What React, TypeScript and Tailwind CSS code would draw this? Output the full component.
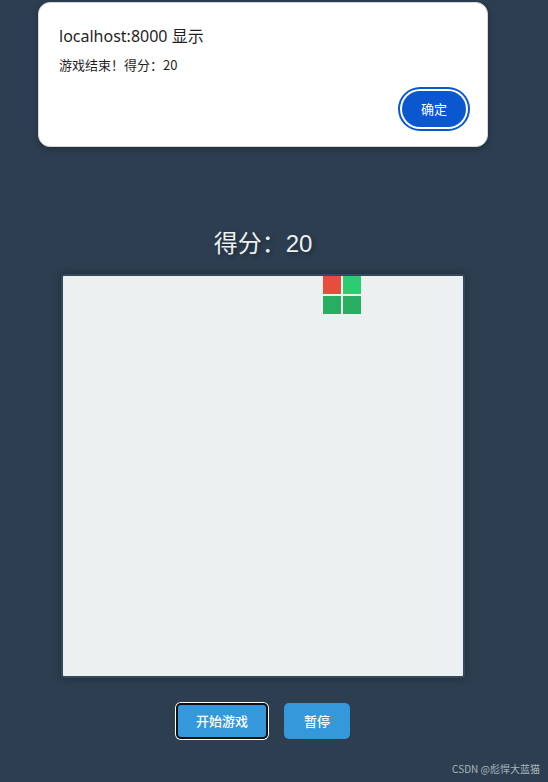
import React from 'react';

type Cell = { x: number; y: number; color: string };

// 当前方块，格子 20px
const piece: Cell[] = [
  { x: 13, y: 0, color: 'bg-[#e74c3c]' },
  { x: 14, y: 0, color: 'bg-[#2ecc71]' },
  { x: 13, y: 1, color: 'bg-[#27ae60]' },
  { x: 14, y: 1, color: 'bg-[#27ae60]' },
];

const AlertDialog: React.FC = () => (
  <div className="absolute left-[38px] top-[2px] w-[450px] h-[145px] bg-white rounded-[12px] border border-[#d6d6d6] shadow-[0_2px_6px_rgba(0,0,0,0.25)] px-[20px] pt-[21px] flex flex-col">
    <div className="text-[16px] leading-[24px] text-[#1f1f1f] font-['Noto_Sans','Noto_Sans_CJK_SC',sans-serif]">
      localhost:8000 显示
    </div>
    <div className="mt-[8px] text-[13px] leading-[18px] text-[#1f1f1f] font-['Noto_Sans_CJK_SC',sans-serif]">
      游戏结束！得分：20
    </div>
    <div className="flex justify-end mt-[17px] pr-[1px]">
      <button className="w-[64px] h-[36px] rounded-full bg-[#0b57d0] text-white text-[13px] font-['Noto_Sans_CJK_SC',sans-serif] shadow-[0_0_0_2px_#fff,0_0_0_4px_#0b57d0]">
        确定
      </button>
    </div>
  </div>
);

const App: React.FC = () => {
  return (
    <div className="relative w-full h-[782px] bg-[#2c3e50] overflow-hidden font-['Liberation_Sans','Noto_Sans_CJK_SC',sans-serif]">
      <div className="w-[526px] flex flex-col items-center pt-[227px]">
        <h1 className="text-[24px] leading-[29px] text-[#ecf0f1] [text-shadow:2px_2px_4px_rgba(0,0,0,0.35)]">
          <span className="font-['Noto_Sans_CJK_SC',sans-serif]">得分：</span>20
        </h1>
        <div className="mt-[16px] w-[404px] h-[404px] border-2 border-[#34495e] rounded-[3px] bg-[#ecf0f1] shadow-[0_0_8px_rgba(0,0,0,0.3)]">
          <div className="relative w-[400px] h-[400px]">
            {piece.map((c, i) => (
              <div
                key={i}
                className={`absolute w-[18px] h-[18px] ${c.color}`}
                style={{ left: c.x * 20, top: c.y * 20 }}
              />
            ))}
          </div>
        </div>
        <div className="mt-[25px] flex gap-[16px] font-['Noto_Sans_CJK_SC',sans-serif]">
          <button className="w-[92px] h-[36px] rounded-[5px] bg-[#3498db] text-white text-[13px] font-medium shadow-[inset_0_0_0_2px_#101010,0_0_0_1px_#ffffff]">
            开始游戏
          </button>
          <button className="w-[66px] h-[36px] rounded-[5px] bg-[#3498db] text-white text-[13px] font-medium">
            暂停
          </button>
        </div>
      </div>

      <AlertDialog />

      <div className="absolute right-[8px] bottom-[6px] text-[10px] text-[#aab4be] font-['Noto_Sans_CJK_SC',sans-serif]">
        CSDN @彪悍大蓝猫
      </div>
    </div>
  );
};

export default App;
